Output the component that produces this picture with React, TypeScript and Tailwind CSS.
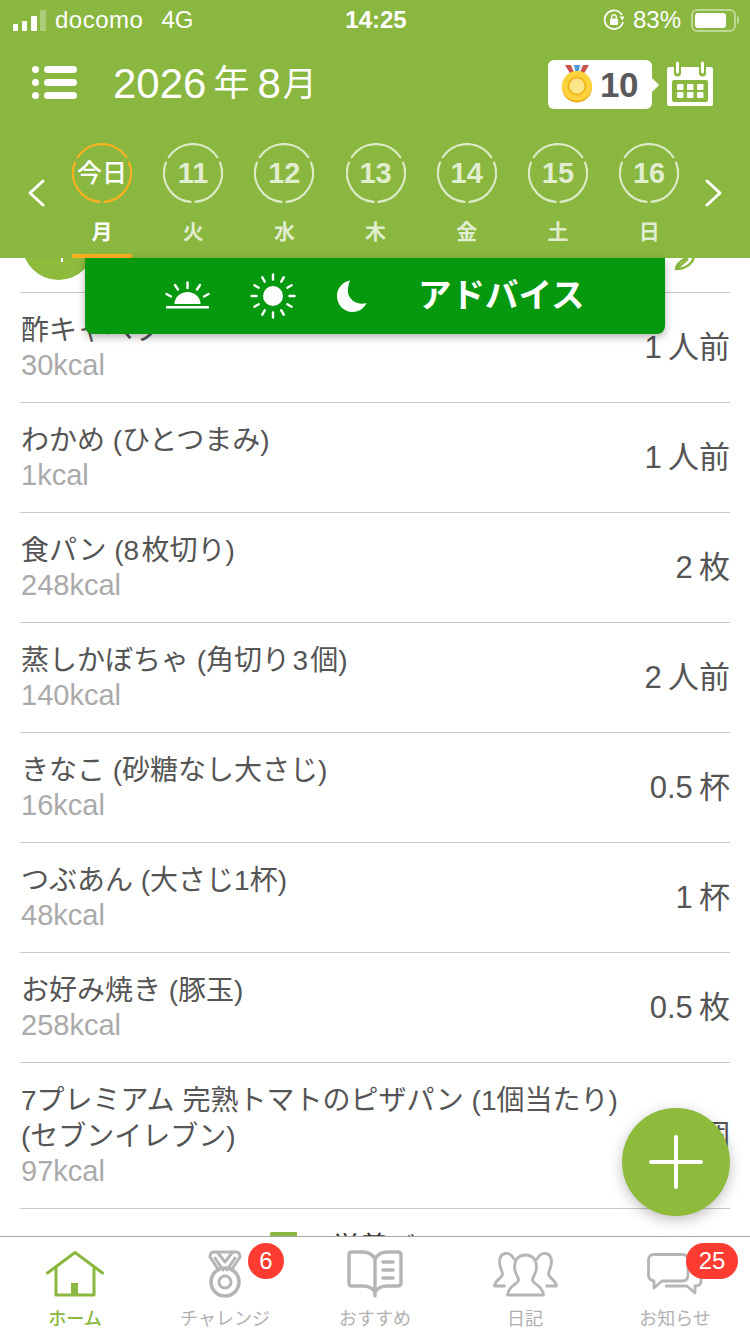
const days = [
  { n: '11', d: '火' },
  { n: '12', d: '水' },
  { n: '13', d: '木' },
  { n: '14', d: '金' },
  { n: '15', d: '土' },
  { n: '16', d: '日' },
];

const foods = [
  { name: '酢キャベツ', kcal: '30kcal', qty: '1\u2009人前' },
  { name: 'わかめ (ひとつまみ)', kcal: '1kcal', qty: '1\u2009人前' },
  { name: '食パン (8\u200a枚切り)', kcal: '248kcal', qty: '2\u2009枚' },
  { name: '蒸しかぼちゃ (角切り\u200a3\u200a個)', kcal: '140kcal', qty: '2\u2009人前' },
  { name: 'きなこ (砂糖なし大さじ)', kcal: '16kcal', qty: '0.5\u2009杯' },
  { name: 'つぶあん (大さじ1杯)', kcal: '48kcal', qty: '1\u2009杯' },
  { name: 'お好み焼き (豚玉)', kcal: '258kcal', qty: '0.5\u2009枚' },
  { name: '7プレミアム 完熟トマトのピザパン (1個当たり) (セブンイレブン)', kcal: '97kcal', qty: '1\u2009個' },
];

function DayRing({ color }: { color: string }) {
  return (
    <svg width="60" height="60" viewBox="0 0 60 60" className="absolute inset-0">
      <g fill="none" stroke={color} strokeWidth="2.2" strokeLinecap="round">
        <path d="M5.7 14.2 A29 29 0 0 1 54.3 14.2" />
        <path d="M57.1 19.6 A29 29 0 0 1 32.5 58.9" />
        <path d="M27.5 58.9 A29 29 0 0 1 2.9 19.6" />
      </g>
    </svg>
  );
}

function Medal() {
  return (
    <svg width="32" height="38" viewBox="0 0 32 38">
      <path d="M4 0 L10 10 L14 10 L10 0 Z" fill="#c9524f" />
      <path d="M28 0 L22 10 L18 10 L22 0 Z" fill="#c9524f" />
      <path d="M10 0 L22 0 L18 9 L14 9 Z" fill="#e8eef2" />
      <path d="M13 0 L19 0 L17 8 L15 8 Z" fill="#4a9bd8" />
      <circle cx="16" cy="22.5" r="15" fill="#e6a50e" />
      <circle cx="16" cy="21" r="15" fill="#fcd33d" />
      <circle cx="16" cy="21" r="9.5" fill="#f3b61f" />
      <circle cx="16" cy="21" r="7.5" fill="#fde58a" />
    </svg>
  );
}

function CalendarIcon() {
  return (
    <svg width="46" height="46" viewBox="0 0 46 46" className="-mt-[1px]">
      <path d="M2 6 H44 A2 2 0 0 1 46 8 V43 A2 2 0 0 1 44 45 H2 A2 2 0 0 1 0 43 V8 A2 2 0 0 1 2 6 Z" fill="#fff" />
      <rect x="5" y="19" width="36" height="22" rx="2" fill="#8ab73f" />
      <g fill="none" strokeLinecap="round">
        <path d="M10.5 2 V12" stroke="#8ab73f" strokeWidth="7" />
        <path d="M35.5 2 V12" stroke="#8ab73f" strokeWidth="7" />
        <path d="M10.5 2 V11" stroke="#fff" strokeWidth="3" />
        <path d="M35.5 2 V11" stroke="#fff" strokeWidth="3" />
      </g>
      <g fill="#fff">
        <rect x="10" y="23" width="6.5" height="6" rx="1" />
        <rect x="20" y="23" width="6.5" height="6" rx="1" />
        <rect x="30" y="23" width="6.5" height="6" rx="1" />
        <rect x="10" y="31" width="6.5" height="6" rx="1" />
        <rect x="20" y="31" width="6.5" height="6" rx="1" />
        <rect x="30" y="31" width="6.5" height="6" rx="1" />
      </g>
    </svg>
  );
}

function SunriseIcon() {
  return (
    <svg width="46" height="30" viewBox="0 0 46 30" fill="#fff">
      <path d="M9.5 23 A13 12 0 0 1 35.5 23 Z" />
      <rect x="1" y="25" width="43" height="2.6" rx="0.5" />
      <g stroke="#fff" strokeWidth="2.4" strokeLinecap="round">
        <path d="M22.5 1.5 V7" />
        <path d="M10 4 L13 8.5" />
        <path d="M35 4 L32 8.5" />
        <path d="M1.5 13 L6 15.5" />
        <path d="M43.5 13 L39 15.5" />
      </g>
    </svg>
  );
}

function SunIcon() {
  const rays = [0, 30, 60, 90, 120, 150, 180, 210, 240, 270, 300, 330];
  return (
    <svg width="46" height="46" viewBox="0 0 46 46">
      <circle cx="23" cy="23" r="10" fill="#fff" />
      {rays.map((r) => (
        <line key={r} x1="23" y1="1.5" x2="23" y2="6.5" stroke="#fff" strokeWidth="2.4" strokeLinecap="round" transform={`rotate(${r} 23 23)`} />
      ))}
    </svg>
  );
}

function Chevron({ dir }: { dir: 'left' | 'right' }) {
  return (
    <svg width="17" height="28" viewBox="0 0 17 28" fill="none" stroke="#fff" strokeWidth="3" strokeLinecap="round" strokeLinejoin="round">
      <path d={dir === 'left' ? 'M15 2 L2 14 L15 26' : 'M2 2 L15 14 L2 26'} />
    </svg>
  );
}

function HomeIcon() {
  return (
    <svg width="58" height="46" viewBox="0 0 58 46" fill="none" stroke="#8ab73f" strokeWidth="3" strokeLinecap="round" strokeLinejoin="round">
      <path d="M1.5 22 L29 1.5 L56.5 22" />
      <path d="M10 16 V44 H48 V16" />
      <rect x="25" y="32" width="7" height="11" fill="#8ab73f" stroke="none" />
    </svg>
  );
}

function MedalTabIcon() {
  return (
    <svg width="34" height="48" viewBox="0 0 34 48" fill="none" stroke="#b5b5b5" strokeWidth="3" strokeLinejoin="round" strokeLinecap="round">
      <path d="M2 7 Q2 2 6 2 H28 Q32 2 32 7 L24 19 M2 7 L10 19" />
      <path d="M10 3 L17 12 L24 3 M7 8 L15 20 M27 8 L19 20" />
      <circle cx="17" cy="32" r="14" strokeWidth="3.6" />
      <circle cx="17" cy="32" r="6" strokeWidth="3" />
    </svg>
  );
}

function BookIcon() {
  return (
    <svg width="56" height="48" viewBox="0 0 56 48" fill="none" stroke="#b5b5b5" strokeWidth="3.4" strokeLinejoin="round" strokeLinecap="round">
      <path d="M28 46 V9 Q24 2 16 2 H5 Q2 2 2 5 V33 Q2 36 5 36 H16 Q24 36 28 42 Q32 36 40 36 H51 Q54 36 54 33 V5 Q54 2 51 2 H40 Q32 2 28 9" />
      <path d="M36 12 H46 M36 20 H46 M36 28 H46" strokeWidth="3.6" />
    </svg>
  );
}

function PeopleIcon() {
  return (
    <svg width="65" height="46" viewBox="0 0 64 46" fill="none" stroke="#b5b5b5" strokeWidth="2.8" strokeLinejoin="round">
      <path d="M21 9 C16 -1 6 1 6 11 C6 17 9 20 9 23 C9 27 2 28 1 35 H12" />
      <path d="M43 9 C48 -1 58 1 58 11 C58 17 55 20 55 23 C55 27 62 28 63 35 H52" />
      <path d="M32 4 C23 4 21 11 21 16 C21 23 25 25 25 29 C25 33 15 34 14 44 H50 C49 34 39 33 39 29 C39 25 43 23 43 16 C43 11 41 4 32 4 Z" />
    </svg>
  );
}

function ChatIcon() {
  return (
    <svg width="56" height="42" viewBox="0 0 56 42" fill="none" stroke="#b5b5b5" strokeWidth="2.8" strokeLinejoin="round">
      <path d="M7 1.5 H35 Q41 1.5 41 7 V22 Q41 28 35 28 H15 L7 35 V28 Q1.5 27 1.5 22 V7 Q1.5 1.5 7 1.5 Z" />
      <path d="M43 14 H49 Q54 14 54 19 V28 Q54 33 48 33 V40 L40 33 H18" />
    </svg>
  );
}

function TabLabel({ children, active }: { children: string; active?: boolean }) {
  return <span className={`mt-[10px] text-[18px] leading-[22px] ${active ? 'text-[#8ab73f] font-medium' : 'text-[#b0b0b0]'}`}>{children}</span>;
}

export default function App() {
  return (
    <div
      className="relative w-[750px] h-[1334px] flex flex-col overflow-hidden bg-white"
      style={{ fontFamily: '"Liberation Sans", "Noto Sans CJK JP", sans-serif' }}
    >
      {/* header */}
      <header className="shrink-0 h-[258px] bg-[#8ab73f] text-white relative z-10 flex flex-col">
        <div className="h-[40px] flex items-center justify-between pl-[13px] pr-[11px] text-[24px]">
          <div className="flex items-center gap-[9px] w-[300px]">
            <div className="flex items-end gap-[3.5px] h-[21px]">
              <span className="w-[5px] h-[7px] bg-white rounded-[1px]" />
              <span className="w-[5.5px] h-[10px] bg-white rounded-[1px]" />
              <span className="w-[6px] h-[15px] bg-white rounded-[1px]" />
              <span className="w-[6px] h-[21px] bg-white/30 rounded-[1px]" />
            </div>
            <span className="tracking-[0.5px]">docomo</span>
            <span className="ml-[9px]">4G</span>
          </div>
          <span className="font-bold">14:25</span>
          <div className="flex items-center justify-end gap-[8px] w-[300px]">
            <svg width="22" height="22" viewBox="0 0 22 22" fill="none" stroke="#fff" strokeWidth="1.7">
              <path d="M19 6 A9.3 9.3 0 1 0 20 13" />
              <path d="M16.5 7.5 L21.5 7.5 L19.5 11.5 Z" fill="#fff" stroke="none" />
              <rect x="7" y="9.5" width="8" height="6.5" rx="1" fill="#fff" stroke="none" />
              <path d="M8.7 9.5 V8 A2.3 2.3 0 0 1 13.3 8 V9.5" strokeWidth="1.3" />
            </svg>
            <span>83%</span>
            <div className="flex items-center gap-[1px] ml-[2px]">
              <div className="w-[45px] h-[23px] rounded-[6px] border-2 border-white/45 p-[2px]">
                <div className="h-full w-[31px] bg-white rounded-[3px]" />
              </div>
              <span className="w-[2px] h-[8px] bg-white/45 rounded-r-sm" />
            </div>
          </div>
        </div>

        <div className="h-[88px] flex items-center pl-[32px] pr-[37px]">
          <div className="flex flex-col gap-[6px] w-[45px] shrink-0 -mt-[3px]">
            {[0, 1, 2].map((i) => (
              <div key={i} className="flex items-center gap-[5px]">
                <span className="w-[7px] h-[7px] rounded-full bg-white" />
                <span className="w-[33px] h-[7px] rounded-full bg-white" />
              </div>
            ))}
          </div>
          <h1 className="ml-[36px] text-[42px] leading-none font-normal flex items-center">
            2026<span className="ml-[7px] mr-[8px] text-[36px]">年</span>8<span className="ml-[2px] text-[34px]">月</span>
          </h1>
          <div className="ml-auto flex items-center gap-[15px]">
            <div className="relative h-[49px] w-[104px] bg-white rounded-[6px] flex items-center pl-[13px] gap-[7px]">
              <Medal />
              <span className="text-[35px] font-bold text-[#5a5a5a] leading-none tracking-[-0.5px]">10</span>
              <span className="absolute -right-[7px] top-[18px] w-0 h-0 border-y-[7px] border-y-transparent border-l-[7px] border-l-white" />
            </div>
            <CalendarIcon />
          </div>
        </div>

        <div className="flex-1 flex items-start pl-[28px]">
          <div className="w-[18px] mt-[51px]">
            <Chevron dir="left" />
          </div>
          <div className="ml-[26px] flex gap-[31.2px]">
            <div className="relative w-[60px] h-[130px] flex flex-col items-center">
              <div className="relative w-[60px] h-[60px] mt-[15px] flex items-center justify-center">
                <DayRing color="#fbb020" />
                <span className="text-[25px] font-medium leading-none whitespace-nowrap">今日</span>
              </div>
              <span className="mt-[16px] text-[21px] leading-[26px] font-bold">月</span>
              <span className="absolute bottom-0 w-[60px] h-[4px] bg-[#fbb020]" />
            </div>
            {days.map((day) => (
              <div key={day.n} className="w-[60px] h-[130px] flex flex-col items-center text-white/75">
                <div className="relative w-[60px] h-[60px] mt-[15px] flex items-center justify-center">
                  <DayRing color="rgba(255,255,255,0.7)" />
                  <span className="text-[29px] font-bold leading-none">{day.n}</span>
                </div>
                <span className="mt-[16px] text-[21px] leading-[26px] font-bold">{day.d}</span>
              </div>
            ))}
          </div>
          <div className="w-[18px] mt-[51px] ml-[26px]">
            <Chevron dir="right" />
          </div>
        </div>
      </header>

      {/* list */}
      <main className="flex-1 min-h-0 overflow-hidden">
        <div className="mx-[20px] h-[35px] border-b border-[#c8c8c8] flex items-end justify-between">
          <div className="relative mb-[12px] ml-[2px] w-[73px] h-[73px] shrink-0 rounded-full bg-[#8ebb3c]">
            <span className="absolute left-[39px] top-[51px] w-[2px] h-[4px] bg-white" />
          </div>
          <svg width="22" height="14" viewBox="0 0 22 14" className="mb-[21px] mr-[34px]" fill="none" stroke="#8ab73f" strokeWidth="2.4">
            <path d="M2 12 C2 6 12 0 20 -2 C20 6 12 12 2 12 Z M2 12 L14 2" />
          </svg>
        </div>
        {foods.map((f) => (
          <div key={f.kcal} className="mx-[20px] py-[20px] border-b border-[#c8c8c8] flex items-center justify-between">
            <div className="w-[610px] pl-px">
              <p className="text-[28px] leading-[36px] text-[#555]">{f.name}</p>
              <p className="text-[29px] leading-[33px] text-[#aaa]">{f.kcal}</p>
            </div>
            <span className="text-[31px] leading-[36px] text-[#555] whitespace-nowrap">{f.qty}</span>
          </div>
        ))}
        <div className="h-[28px] flex items-start pl-[270px] gap-[35px]">
          <span className="mt-[23px] w-[27px] h-[5px] bg-[#8ab73f] rounded-tl-[2px]" />
          <span className="mt-[21px] text-[28px] leading-[36px] text-[#333]">栄養バー</span>
        </div>
      </main>

      {/* tab bar */}
      <nav className="shrink-0 h-[98px] bg-white border-t border-[#a8a8a8] relative z-10 grid grid-cols-5">
        <div className="flex flex-col items-center pt-[13px]">
          <div className="h-[48px] flex items-center"><HomeIcon /></div>
          <TabLabel active>ホーム</TabLabel>
        </div>
        <div className="relative flex flex-col items-center pt-[13px]">
          <div className="h-[48px] flex items-center"><MedalTabIcon /></div>
          <TabLabel>チャレンジ</TabLabel>
          <span className="absolute left-[98px] top-[6px] w-[36px] h-[36px] rounded-full bg-[#fe3b30] text-white text-[24px] flex items-center justify-center">6</span>
        </div>
        <div className="flex flex-col items-center pt-[13px]">
          <div className="h-[48px] flex items-center"><BookIcon /></div>
          <TabLabel>おすすめ</TabLabel>
        </div>
        <div className="flex flex-col items-center pt-[13px]">
          <div className="h-[48px] flex items-center"><PeopleIcon /></div>
          <TabLabel>日記</TabLabel>
        </div>
        <div className="relative flex flex-col items-center pt-[13px]">
          <div className="h-[48px] flex items-center"><ChatIcon /></div>
          <TabLabel>お知らせ</TabLabel>
          <span className="absolute left-[86px] top-[6px] w-[52px] h-[36px] rounded-full bg-[#fe3b30] text-white text-[24px] flex items-center justify-center">25</span>
        </div>
      </nav>

      {/* advice bar */}
      <div className="absolute left-[85px] top-[258px] z-20 w-[580px] h-[76px] bg-[#06990f] rounded-b-[8px] shadow-[0_3px_8px_rgba(0,0,0,0.3)] flex items-center pl-[80px] text-white">
        <SunriseIcon />
        <div className="ml-[39px]"><SunIcon /></div>
        <svg width="30" height="32" viewBox="0 0 30 32" className="ml-[41px]" fill="#fff">
          <path d="M13 0.5 C6 1.5 0 8 0 16 C0 25 7 32 15.5 32 C22 32 27.5 28 29.5 23 C21 25.5 12.5 20.5 11 13 C10.5 8 11.5 4 13 0.5 Z" />
        </svg>
        <span className="ml-[51px] text-[33.5px] font-bold leading-none">アドバイス</span>
      </div>

      {/* add button */}
      <button className="absolute left-[622px] top-[1108px] z-20 w-[108px] h-[108px] rounded-full bg-[#8ebb3c] shadow-[0_4px_14px_rgba(0,0,0,0.25)] flex items-center justify-center">
        <svg width="54" height="54" viewBox="0 0 54 54" stroke="#fff" strokeWidth="4" strokeLinecap="round">
          <path d="M27 2 V52 M2 27 H52" />
        </svg>
      </button>
    </div>
  );
}
